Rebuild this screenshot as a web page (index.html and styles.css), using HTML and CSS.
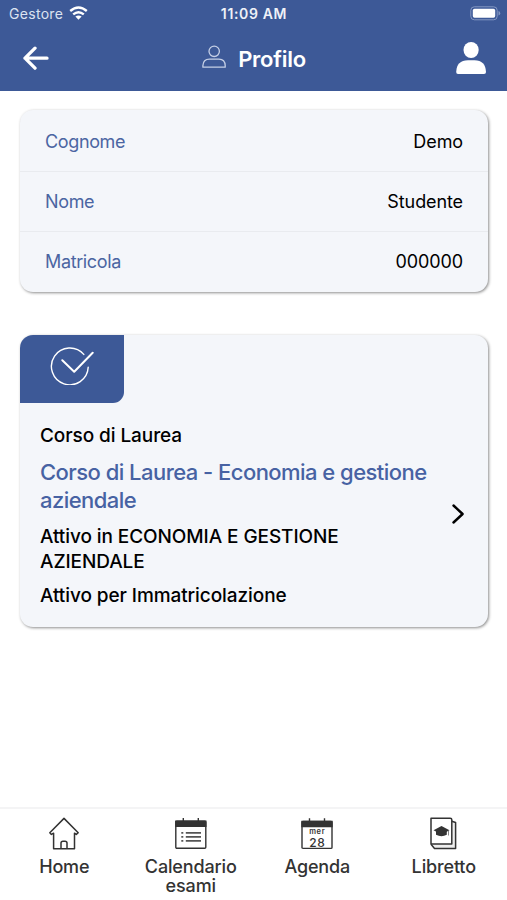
FILE: index.html
```html
<!DOCTYPE html>
<html lang="it">
<head>
<meta charset="utf-8">
<title>Profilo</title>
<link rel="stylesheet" href="styles.css">
</head>
<body>
<div class="app">
  <header class="header">
    <div class="status">
      <div class="carrier"><span>Gestore</span>
        <svg width="19" height="14" viewBox="0 0 19 14" fill="none" stroke="#fff" stroke-width="2.4"><path d="M1.2 5Q9.5-2 17.8 5"/><path d="M4.2 8.4Q9.5 4 14.8 8.4"/><path d="M6.4 10.6Q9.5 8.2 12.6 10.6L9.5 13.8Z" fill="#fff" stroke="none"/></svg>
      </div>
      <span class="clock">11:09 AM</span>
      <svg class="battery" width="31" height="15" viewBox="0 0 31 15"><rect x=".8" y=".8" width="26.4" height="13" rx="3.5" fill="none" stroke="#8497c2"/><rect x="2.8" y="2.8" width="22.4" height="9" rx="1.7" fill="#fff"/><path d="M28.5 5Q30.2 5.4 30.2 7.3T28.5 9.6Z" fill="#8497c2"/></svg>
    </div>
    <div class="titlebar">
      <svg class="back" width="28" height="26" viewBox="0 0 28 26" fill="none" stroke="#fff" stroke-width="3.3" stroke-linecap="round" stroke-linejoin="round"><path d="M14 2.2L4 12.2L14 22.2M4 12.2H26"/></svg>
      <h1 class="title">
        <svg width="24" height="24" viewBox="0 0 24 24" fill="none" stroke="#c5cfe6" stroke-width="1.3"><circle cx="12.2" cy="6.3" r="5.2"/><path d="M.9 22.2V20.5Q1.2 14.1 7.5 14.1H17Q23 14.3 23.2 20.5V22.2Z" stroke-linejoin="round"/></svg>
        <span>Profilo</span>
      </h1>
      <svg class="avatar" width="30" height="34" viewBox="0 0 30 34" fill="#fff"><ellipse cx="15.1" cy="8" rx="7.6" ry="8"/><path d="M.2 30Q.6 18.2 12 18.2H18.5Q29.5 18.2 30 30Q30 32 28 32H2Q.2 32 .2 30Z"/></svg>
    </div>
  </header>

  <main class="content">
    <dl class="card details">
      <div class="row"><dt>Cognome</dt><dd>Demo</dd></div>
      <div class="row"><dt>Nome</dt><dd>Studente</dd></div>
      <div class="row"><dt>Matricola</dt><dd>000000</dd></div>
    </dl>

    <section class="card course">
      <div class="badge">
        <svg width="44" height="40" viewBox="0 0 44 40" fill="none" stroke="#fff" stroke-linecap="round" stroke-linejoin="round"><path d="M33.8 9.4A18.4 18.4 0 1 0 38.2 22.3" stroke-width="1.4"/><path d="M12.3 15.3L24.2 26.7L42.7 7.8" stroke-width="2"/></svg>
      </div>
      <div class="course-body">
        <div class="course-text">
          <p class="kind">Corso di Laurea</p>
          <h2 class="name">Corso di Laurea - Economia e gestione aziendale</h2>
          <p class="active">Attivo in ECONOMIA E GESTIONE AZIENDALE</p>
          <p class="reason">Attivo per Immatricolazione</p>
        </div>
        <svg class="chevron" width="14" height="22" viewBox="0 0 14 22" fill="none" stroke="#000" stroke-width="2.4" stroke-linecap="round" stroke-linejoin="round"><path d="M2.5 2.5L11.6 11L2.5 19.5"/></svg>
      </div>
    </section>
  </main>

  <nav class="tabs">
    <a class="tab"><svg width="34" height="34" viewBox="0 0 34 34" fill="none" stroke="#333" stroke-width="1.5" stroke-linejoin="round"><path d="M17 1.4L31.2 15.7L29.3 17.4L27.5 16.2V31.7H6.6V16.2L4.4 17.4L2.8 15.7Z"/><path d="M14 31V26Q14 24.2 16 24.2H18Q20 24.2 20 26V31"/></svg><span>Home</span></a>
    <a class="tab"><svg width="34" height="34" viewBox="0 0 34 34" fill="none" stroke="#333" stroke-width="1.4"><rect x="1.8" y="4.2" width="30" height="27" rx="1"/><path d="M1.8 4.2H31.8V9.2H1.8Z" fill="#333"/><path d="M9.3 1V5M24.3 1V5"/><path d="M11.8 15.9H27M11.8 19.9H27M11.8 23.9H27" stroke="#555" stroke-width="1.6"/><path d="M7.3 15.9H9.3M7.3 19.9H9.3M7.3 23.9H9.3" stroke="#555" stroke-width="1.6"/></svg><span>Calendario esami</span></a>
    <a class="tab"><svg width="34" height="34" viewBox="0 0 34 34" fill="none" stroke="#333" stroke-width="1.4"><rect x="2" y="4.4" width="30" height="27" rx="1"/><path d="M2 4.4H32V9.6H2Z" fill="#333"/><path d="M9.5 1.2V5M24.5 1.2V5"/><g class="date"><text x="17.3" y="16.6" class="weekday">mer</text><text x="17.3" y="30" class="daynum">28</text></g></svg><span>Agenda</span></a>
    <a class="tab"><svg width="34" height="34" viewBox="0 0 34 34" fill="none" stroke="#333" stroke-width="1.5" stroke-linejoin="round"><path d="M24.8 4.2L28.6 5.5V31.4H7.5L4 27.2" fill="#eee"/><path d="M4 1.2H23.2Q24.8 1.2 24.8 2.8V27H4Z" fill="#fff"/><path d="M14.5 9L22.5 13.3L14.5 17.6L6.5 13.3Z" fill="#333" stroke="none"/><path d="M9 14V17.8Q14.5 20.5 19.8 17.8V14Z" fill="#333" stroke="none"/><path d="M21.5 14V18.5" stroke="#888" stroke-width="1"/></svg><span>Libretto</span></a>
  </nav>
</div>
</body>
</html>
```
FILE: styles.css
```css
* { box-sizing: border-box; }
body { margin: 0; background: #fff; color: #000; font-family: Inter, "Liberation Sans", sans-serif; }
h1, h2, p, dl, dd { margin: 0; font-weight: 400; }
svg { display: block; flex: none; }
.app { height: 900px; display: flex; flex-direction: column; overflow: hidden; }

.header { height: 91px; background: #3d5997; color: #fff; flex: none; }
.status { height: 28px; display: grid; grid-template-columns: 1fr auto 1fr; align-items: center; padding: 0 6px 0 9px; font-size: 14px; }
.carrier { display: flex; align-items: center; gap: 6px; color: #dce3f1; letter-spacing: .3px; margin-top: -1px; }
.carrier svg { margin-top: -2px; }
.clock { font-weight: 600; color: #eef1f8; letter-spacing: .65px; margin: -2px 0 0 -2px; }
.battery { justify-self: end; margin-top: -1px; }
.titlebar { height: 61px; display: grid; grid-template-columns: 1fr auto 1fr; align-items: center; padding: 0 21px; }
.title { display: flex; align-items: center; gap: 12px; font-size: 22px; padding-left: 1px; }
.title span { font-weight: 600; letter-spacing: -.25px; }
.title svg { margin-top: -4px; }
.avatar { justify-self: end; }

.content { flex: 1; padding: 19px 19px 0 20px; }
.card { background: #f4f6fa; border-radius: 13px; box-shadow: 1px 1px 3px rgba(0, 0, 0, .45); }
.details { height: 182px; display: grid; grid-template-rows: 61px 60px 61px; font-size: 18px; }
.row { display: flex; justify-content: space-between; align-items: center; padding: 2px 25px 0; }
.row + .row { border-top: 1px solid #e9ebef; padding-top: 0; }
.row:last-child { padding-bottom: 1px; }
.row dt { color: #4b65a2; letter-spacing: -.36px; }
.row dd { letter-spacing: -.1px; }

.course { margin-top: 43px; height: 292px; overflow: hidden; }
.badge { width: 104px; height: 68px; background: #3d5997; border-radius: 0 0 11px 0; padding: 10px 0 0 30px; }
.course-body { display: flex; align-items: center; padding: 20px 23px 0 20px; height: 214px; }
.course-text { flex: 1; height: 194px; font-size: 19px; line-height: 25px; letter-spacing: -.08px; }
.course-text p { font-weight: 480; }
.kind { margin-bottom: 10px; }
.course-text .name { color: #4762a3; font-size: 22px; line-height: 28px; font-weight: 450; margin-bottom: 10px; letter-spacing: -.54px; }
.active { width: 320px; margin-bottom: 9px; }
.chevron { margin-bottom: 12px; }

.tabs { height: 93px; flex: none; border-top: 2px solid #f4f4f5; display: grid; grid-template-columns: repeat(4, 1fr); color: #333; padding-left: 1px; }
.tab { display: flex; flex-direction: column; align-items: center; padding-top: 8px; font-size: 18px; font-weight: 480; line-height: 19px; text-align: center; letter-spacing: -.15px; }
.tab span { margin-top: 6px; }
.date { fill: #333; stroke: none; text-anchor: middle; }
.weekday { font-size: 7.5px; font-weight: 600; letter-spacing: .7px; }
.daynum { font-size: 12px; font-weight: 500; letter-spacing: .5px; }
```
